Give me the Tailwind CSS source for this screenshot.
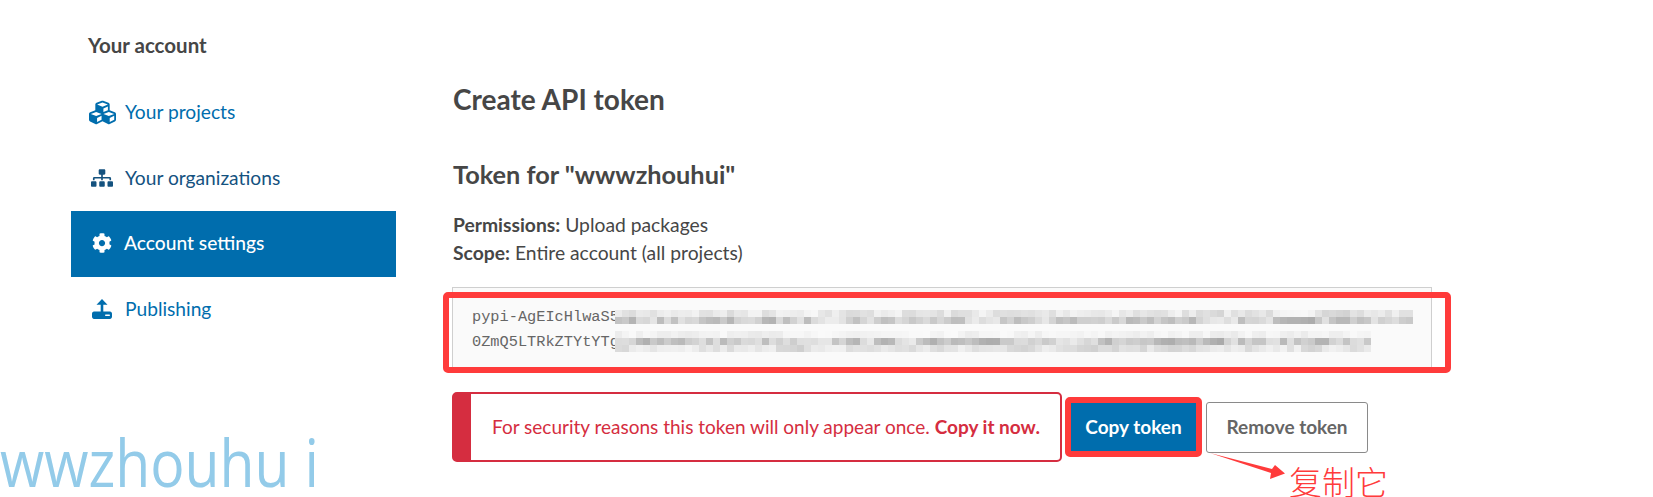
<!DOCTYPE html>
<html lang="en">
<head>
  <meta charset="UTF-8">
  <title>Create API token</title>
  <script src="https://cdn.jsdelivr.net/npm/@tailwindcss/browser@4"></script>
</head>
<body class="bg-white">
  <div class="relative h-[497px] w-[1653px] overflow-hidden flex font-['Lato','Noto_Sans',sans-serif] text-[#464646]">

    <!-- Sidebar -->
    <aside class="ml-[71px] mr-[56px] w-[325px] shrink-0">
      <h2 class="pl-[17px] pt-[32px] h-[80px] text-[20.5px] leading-[26px] font-bold text-[#464646]">Your account</h2>
      <nav class="text-[19.2px]">
        <a class="flex items-center h-[65px] pl-[18px] gap-[9px] text-[#006dad]">
          <svg class="w-[27px] h-[27px]" viewBox="0 0 512 512" fill="currentColor"><path d="M488.6 250.2L392 214V105.5c0-15-9.3-28.4-23.4-33.7l-100-37.5c-8.1-3.1-17.1-3.1-25.3 0l-100 37.5c-14.1 5.3-23.4 18.7-23.4 33.7V214l-96.6 36.2C9.3 255.5 0 268.9 0 283.9V394c0 13.6 7.7 26.1 19.9 32.2l100 50c10.1 5.1 22.1 5.1 32.2 0l103.9-52 103.9 52c10.1 5.1 22.1 5.1 32.2 0l100-50c12.2-6.1 19.9-18.6 19.9-32.2V283.9c0-15-9.3-28.4-23.4-33.7zM358 214.8l-85 31.9v-68.2l85-37v73.3zM154 104.1l102-38.2 102 38.2v.6l-102 41.4-102-41.4v-.6zm84 291.1l-85 42.5v-79.1l85-38.8v75.4zm0-112l-102 41.4-102-41.4v-.6l102-38.2 102 38.2v.6zm240 112l-85 42.5v-79.1l85-38.8v75.4zm0-112l-102 41.4-102-41.4v-.6l102-38.2 102 38.2v.6z"/></svg>
          <span>Your projects</span>
        </a>
        <a class="flex items-center h-[66px] pl-[20px] gap-[12px] text-[#14527f]">
          <svg class="w-[22px] h-[18px]" viewBox="0 0 640 512" fill="currentColor"><path d="M128 352H32c-17.67 0-32 14.33-32 32v96c0 17.67 14.33 32 32 32h96c17.67 0 32-14.33 32-32v-96c0-17.67-14.33-32-32-32zm-24-80h192v48h48v-48h192v48h48v-57.59c0-21.17-17.23-38.41-38.41-38.41H344v-64h40c17.67 0 32-14.33 32-32V32c0-17.67-14.33-32-32-32H256c-17.67 0-32 14.33-32 32v96c0 17.67 14.33 32 32 32h40v64H94.41C73.23 224 56 241.23 56 262.41V320h48v-48zm264 80h-96c-17.67 0-32 14.33-32 32v96c0 17.67 14.33 32 32 32h96c17.67 0 32-14.33 32-32v-96c0-17.67-14.33-32-32-32zm240 0h-96c-17.67 0-32 14.33-32 32v96c0 17.67 14.33 32 32 32h96c17.67 0 32-14.33 32-32v-96c0-17.67-14.33-32-32-32z"/></svg>
          <span>Your organizations</span>
        </a>
        <a class="flex items-center h-[66px] pl-[21px] gap-[12px] pb-[2px] bg-[#006dad] text-white font-medium">
          <svg class="w-[20px] h-[20px]" viewBox="0 0 512 512" fill="currentColor"><path d="M487.4 315.7l-42.6-24.6c4.3-23.2 4.3-47 0-70.2l42.6-24.6c4.9-2.8 7.1-8.6 5.5-14-11.1-35.6-30-67.8-54.7-94.6-3.8-4.1-10-5.1-14.8-2.3L380.8 110c-17.9-15.4-38.5-27.3-60.8-35.1V25.8c0-5.6-3.9-10.5-9.4-11.7-36.7-8.2-74.3-7.8-109.2 0-5.5 1.2-9.4 6.1-9.4 11.7V75c-22.2 7.9-42.8 19.8-60.8 35.1L88.7 85.5c-4.9-2.8-11-1.9-14.8 2.3-24.7 26.7-43.6 58.9-54.7 94.6-1.7 5.4.6 11.2 5.5 14L67.3 221c-4.3 23.2-4.3 47 0 70.2l-42.6 24.6c-4.9 2.8-7.1 8.6-5.5 14 11.1 35.6 30 67.8 54.7 94.6 3.8 4.1 10 5.1 14.8 2.3l42.6-24.6c17.9 15.4 38.5 27.3 60.8 35.1v49.2c0 5.6 3.9 10.5 9.4 11.7 36.7 8.2 74.3 7.8 109.2 0 5.5-1.2 9.4-6.1 9.4-11.7v-49.2c22.2-7.9 42.8-19.8 60.8-35.1l42.6 24.6c4.9 2.8 11 1.9 14.8-2.3 24.7-26.7 43.6-58.9 54.7-94.6 1.5-5.5-.7-11.3-5.6-14.1zM256 336c-44.1 0-80-35.9-80-80s35.9-80 80-80 80 35.9 80 80-35.9 80-80 80z"/></svg>
          <span>Account settings</span>
        </a>
        <a class="flex items-center h-[64px] pl-[21px] gap-[13px] text-[#006dad]">
          <svg class="w-[20px] h-[20px]" viewBox="0 0 20 20" fill="currentColor"><path d="M10 0l5.500 5.800h-4.200V13H8.700V5.800H4.500zM2 12.500h16c1.100 0 2 1 2 2.200v3c0 1.200-.9 2.300-2 2.300H2c-1.100 0-2-1.100-2-2.300v-3c0-1.200.9-2.200 2-2.200z"/><rect x="13" y="15.500" width="5" height="1.500" rx=".7" fill="#fff"/></svg>
          <span>Publishing</span>
        </a>
      </nav>
    </aside>

    <!-- Main -->
    <main class="w-[980px] shrink-0">
      <h1 class="ml-px pt-[80px] text-[28px] leading-[38px] font-bold">Create API token</h1>
      <h2 class="ml-px mt-[38px] text-[25.3px] leading-[36px] font-bold">Token for "wwwzhouhui"</h2>
      <p class="ml-px mt-[19px] text-[19.3px] leading-[28px]"><strong class="font-bold">Permissions:</strong> Upload packages<br><strong class="font-bold">Scope:</strong> Entire account (all projects)</p>

      <div class="relative mt-[20px] h-[82px] border border-[#cfcfcf] bg-[#fafafa] pl-[19px] pt-[17px] font-['Liberation_Mono',monospace] text-[15.3px] leading-[25px] text-[#666]">
        <div>pypi-AgEIcHlwaS5</div>
        <div>0ZmQ5LTRkZTYtYTg</div>
        <svg id="blur" class="absolute left-[162px] top-[22px]" width="800" height="45"></svg>
      </div>

      <div class="mt-[23px] flex items-start">
        <div class="flex items-center h-[70px] w-[610px] rounded-[5px] border-2 border-[#d52d40] border-l-[19px] pl-[21px] text-[19px] text-[#d52d40]">
          <p>For security reasons this token will only appear once. <strong class="font-bold">Copy it now.</strong></p>
        </div>
        <button class="ml-[9px] mt-[11px] h-[48px] w-[125px] bg-[#006dad] text-[19px] font-bold text-white">Copy token</button>
        <button class="ml-[10px] mt-[10px] h-[51px] w-[162px] rounded-[3px] border border-[#8a8a8a] bg-white text-[19px] font-bold text-[#666]">Remove token</button>
      </div>
    </main>

    <!-- Annotations drawn over the page -->
    <div class="absolute left-[443px] top-[292px] h-[81px] w-[1008px] rounded-[5px] border-[6px] border-[#ff3b3b]"></div>
    <div class="absolute left-[1065px] top-[397px] h-[60px] w-[137px] rounded-[5px] border-[6px] border-[#ff3b3b]"></div>
    <svg class="absolute left-[1205px] top-[450px]" width="85" height="30" viewBox="0 0 85 30"><path d="M5 3L67 19L70 15L80 23.500L65 29L66 23Z" fill="#ff3b3b"/></svg>
    <span class="absolute left-[1289px] top-[465px] text-[33px] leading-[32px] text-[#ff3b3b] font-['Noto_Sans_CJK_SC',sans-serif] font-light">复制它</span>
    <span class="absolute left-0 top-[428px] origin-left scale-x-[.865] text-[66px] leading-[66px] text-[#93cbe9] font-['Open_Sans',sans-serif] font-normal whitespace-pre">wwzhouhu i</span>
  </div>

  <script>
    // pixelated token: grey cells, same pattern each run
    const svg = document.getElementById('blur');
    let seed = 7;
    const rnd = () => (seed = (seed * 16807) % 2147483647) / 2147483647;
    const rows = [[0, 798, 208, 44], [7, 798, 170, 70], [21, 750, 232, 20], [28, 750, 168, 72], [35, 750, 204, 44]];
    let out = '';
    for (const [y, w, base, spread] of rows) {
      let prev = rnd();
      for (let x = 0; x < w; x += 7) {
        prev = prev * 0.3 + rnd() * 0.7;
        const g = Math.min(250, Math.round(base + prev * spread));
        out += `<rect x="${x}" y="${y}" width="7" height="7" fill="rgb(${g},${g},${g})"/>`;
      }
    }
    svg.innerHTML = out;
  </script>
</body>
</html>
